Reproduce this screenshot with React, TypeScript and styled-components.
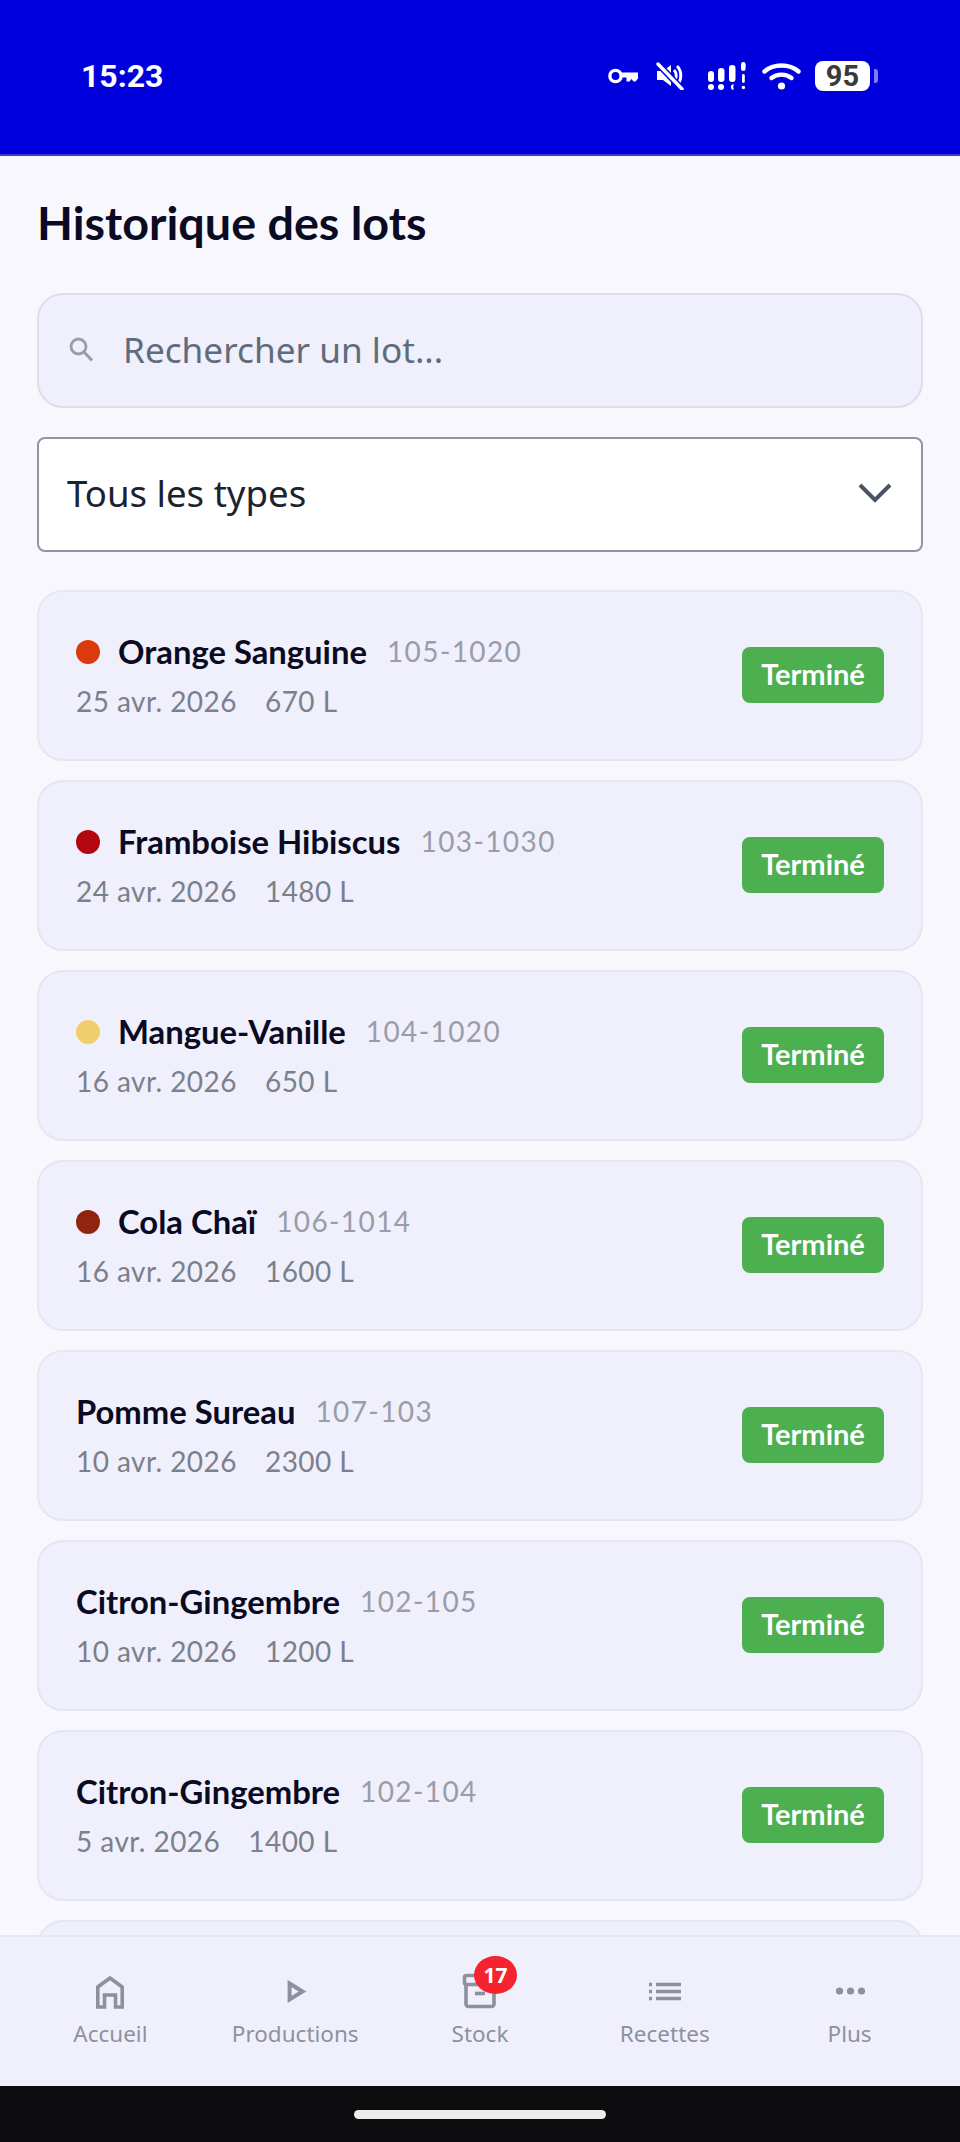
import React from "react";
import styled, { createGlobalStyle } from "styled-components";

const Global = createGlobalStyle`
  html, body { margin: 0; padding: 0; background: #f7f7fd; }
  * { box-sizing: border-box; }
`;

const Screen = styled.div`
  width: 960px;
  height: 2142px;
  display: flex;
  flex-direction: column;
  overflow: hidden;
  background: #f7f7fd;
  font-family: "Noto Sans", sans-serif;
`;

const StatusBar = styled.header`
  flex: 0 0 156px;
  background: #0000dc;
  border-bottom: 2px solid #3a3ad6;
  display: flex;
  align-items: flex-start;
  justify-content: space-between;
  padding: 58px 82px 0 81px;
`;

const Clock = styled.span`
  font-family: Roboto, sans-serif;
  font-weight: 700;
  font-size: 32px;
  line-height: 36px;
  color: #fff;
`;

const StatusIcons = styled.div`
  display: flex;
  align-items: center;
  height: 36px;
  color: #fff;
  svg { display: block; flex: none; }
`;

const KeyIcon = styled.svg`
  margin-right: 18px;
`;
const MuteIcon = styled.svg`
  margin-right: 24px;
`;
const SignalIcon = styled.svg`
  margin-right: 15px;
`;
const WifiIcon = styled.svg`
  margin-right: 14px;
`;

const Battery = styled.div`
  width: 55px;
  height: 30px;
  border-radius: 8px;
  background: #fff;
  color: #3a3a3a;
  font-family: Roboto, sans-serif;
  font-weight: 700;
  font-size: 29px;
  line-height: 30px;
  text-align: center;
`;
const BatteryTab = styled.div`
  width: 4px;
  height: 14px;
  margin-left: 4px;
  border-radius: 0 3px 3px 0;
  background: #7f7fee;
`;

const Content = styled.main`
  flex: 1;
  min-height: 0;
  overflow: hidden;
  padding: 0 37px;
`;

const Title = styled.h1`
  margin: 39px 0 0;
  font-family: Lato, sans-serif;
  font-weight: 700;
  font-size: 46.7px;
  line-height: 54px;
  color: #0a0a23;
`;

const Search = styled.div`
  margin-top: 44px;
  height: 115px;
  display: flex;
  align-items: center;
  padding: 0 0 3px 28px;
  background: #eff0fb;
  border: 2px solid #dcdeeb;
  border-radius: 26px;
  color: #9a9ca8;
`;

const SearchText = styled.span`
  margin-left: 28px;
  font-size: 35.2px;
  color: #5f6c7c;
`;

const Select = styled.div`
  margin-top: 29px;
  height: 115px;
  display: flex;
  align-items: center;
  justify-content: space-between;
  padding: 0 28px 3px 28px;
  background: #fff;
  border: 2px solid #8b95a3;
  border-radius: 8px;
  font-size: 36.6px;
  color: #1c2230;
`;

const List = styled.div`
  margin-top: 38px;
  display: flex;
  flex-direction: column;
  gap: 19px;
`;

const Card = styled.article`
  flex: none;
  height: 171px;
  display: flex;
  align-items: center;
  justify-content: space-between;
  padding: 0 37px;
  background: #eff0fb;
  border: 2px solid #e4e6f2;
  border-radius: 26px;
`;

const CardBody = styled.div`
  display: flex;
  flex-direction: column;
  gap: 9px;
`;

const NameRow = styled.div`
  display: flex;
  align-items: center;
  margin-top: -1px;
  margin-bottom: 1px;
`;

const Dot = styled.span<{ $color: string }>`
  width: 24px;
  height: 24px;
  margin-right: 18px;
  border-radius: 50%;
  background: ${(p) => p.$color};
`;

const Name = styled.span`
  font-family: Lato, sans-serif;
  font-weight: 700;
  font-size: 32.8px;
  line-height: 42px;
  color: #0a0a23;
`;

const Code = styled.span`
  margin-left: 20px;
  margin-top: -3px;
  font-family: Lato, sans-serif;
  font-size: 28px;
  letter-spacing: 1.4px;
  color: #9a9ca8;
`;

const Meta = styled.div`
  display: flex;
  gap: 28px;
  font-family: Lato, sans-serif;
  font-size: 28px;
  line-height: 36px;
  letter-spacing: 0.45px;
  color: #7c7f8c;
`;

const Status = styled.span`
  width: 142px;
  height: 56px;
  display: flex;
  align-items: center;
  justify-content: center;
  margin-bottom: 1px;
  padding-bottom: 4px;
  border-radius: 8px;
  background: #4caf50;
  color: #fff;
  font-family: Lato, sans-serif;
  font-weight: 700;
  font-size: 29px;
`;

const Nav = styled.nav`
  flex: 0 0 151px;
  display: grid;
  grid-template-columns: repeat(5, 1fr);
  background: #f0f0fc;
  border-top: 2px solid #e6e7f3;
  padding: 0 18px;
`;

const NavItem = styled.div`
  display: flex;
  flex-direction: column;
  align-items: center;
  padding-top: 32px;
  color: #8f909e;
`;

const NavIcon = styled.div`
  position: relative;
  width: 44px;
  height: 44px;
  svg { display: block; }
`;

const NavLabel = styled.span`
  margin-top: 6px;
  font-size: 22.5px;
  line-height: 30px;
`;

const CountBadge = styled.span`
  position: absolute;
  left: 16px;
  top: -13px;
  width: 43px;
  height: 38px;
  border-radius: 50%;
  display: flex;
  align-items: center;
  justify-content: center;
  background: #f3242f;
  color: #fff;
  font-weight: 700;
  font-size: 21px;
`;

const GestureBar = styled.div`
  flex: 0 0 56px;
  display: flex;
  justify-content: center;
  padding-top: 24px;
  background: #0c0c0e;
`;

const GesturePill = styled.div`
  width: 252px;
  height: 9px;
  border-radius: 5px;
  background: #ededed;
`;

type Lot = { name: string; code: string; date: string; volume: string; dot?: string };

const lots: Lot[] = [
  { name: "Orange Sanguine", code: "105-1020", date: "25 avr. 2026", volume: "670 L", dot: "#dc3a0c" },
  { name: "Framboise Hibiscus", code: "103-1030", date: "24 avr. 2026", volume: "1480 L", dot: "#b3070f" },
  { name: "Mangue-Vanille", code: "104-1020", date: "16 avr. 2026", volume: "650 L", dot: "#efcf6b" },
  { name: "Cola Chaï", code: "106-1014", date: "16 avr. 2026", volume: "1600 L", dot: "#90240f" },
  { name: "Pomme Sureau", code: "107-103", date: "10 avr. 2026", volume: "2300 L" },
  { name: "Citron-Gingembre", code: "102-105", date: "10 avr. 2026", volume: "1200 L" },
  { name: "Citron-Gingembre", code: "102-104", date: "5 avr. 2026", volume: "1400 L" },
];

const stroke = { fill: "none", stroke: "currentColor", strokeWidth: 3.6 } as const;

const navItems = [
  {
    label: "Accueil",
    icon: (
      <svg width="44" height="44" viewBox="0 0 44 44">
        <path d="M9.8 38V18L22 9L34.2 18V38H27.5V26H16.5V38Z" {...stroke} />
      </svg>
    ),
  },
  {
    label: "Productions",
    icon: (
      <svg width="44" height="44" viewBox="0 0 44 44">
        <path d="M16.6 14.5L29.5 22.5L16.6 30.5Z" {...stroke} strokeWidth={4} />
      </svg>
    ),
  },
  {
    label: "Stock",
    badge: "17",
    icon: (
      <svg width="44" height="44" viewBox="0 0 44 44">
        <rect x="6.5" y="6.5" width="31" height="9" rx="2" {...stroke} />
        <path d="M8 16V35a2.5 2.5 0 0 0 2.5 2.5H33.5a2.5 2.5 0 0 0 2.5-2.5V16" {...stroke} />
        <path d="M17 24.5H27" {...stroke} />
      </svg>
    ),
  },
  {
    label: "Recettes",
    icon: (
      <svg width="44" height="44" viewBox="0 0 44 44">
        <path d="M13 15.5H38M13 22.5H38M13 29.5H38" {...stroke} />
        <path d="M6 15.5H9M6 22.5H9M6 29.5H9" {...stroke} />
      </svg>
    ),
  },
  {
    label: "Plus",
    icon: (
      <svg width="44" height="44" viewBox="0 0 44 44" fill="currentColor">
        <circle cx="11.5" cy="22" r="3.6" />
        <circle cx="22.5" cy="22" r="3.6" />
        <circle cx="33.5" cy="22" r="3.6" />
      </svg>
    ),
  },
];

export default function App() {
  return (
    <Screen>
      <Global />
      <StatusBar>
        <Clock>15:23</Clock>
        <StatusIcons>
          <KeyIcon width="30" height="16" viewBox="0 0 30 16" fill="none">
            <circle cx="7.5" cy="8" r="5.6" stroke="currentColor" strokeWidth="3.4" />
            <path d="M12 4.6H30V10.5L27.5 13.5H25.5L23.5 11L21.5 13.5H18.5V9.6H12Z" fill="currentColor" />
          </KeyIcon>
          <MuteIcon width="28" height="28" viewBox="0 0 28 28" fill="none">
            <path d="M1 9H7L15 3V24L7 18H1Z" fill="currentColor" />
            <path d="M18 8C21 11 21 16 18 19M21 4C26 9 26 18 21 23" stroke="currentColor" strokeWidth="3" />
            <path d="M2 2L26 27" stroke="#0000dc" strokeWidth="6.5" />
            <path d="M2 2L26 27" stroke="currentColor" strokeWidth="3.4" strokeLinecap="round" />
          </MuteIcon>
          <SignalIcon width="39" height="28" viewBox="0 0 39 28" fill="currentColor">
            <rect x="0" y="9" width="6" height="11" rx="3" />
            <circle cx="3" cy="25" r="3" />
            <rect x="10" y="6" width="6.5" height="14" rx="3.2" />
            <circle cx="13" cy="25" r="3" />
            <rect x="21" y="3" width="6.5" height="17" rx="3.2" />
            <path d="M24 22.5C22.5 24 22.5 26.5 24 27.5H26C25 26 25 24 26 22.5Z" />
            <rect x="33" y="0" width="4.6" height="9" rx="2.3" />
            <rect x="34" y="12" width="2.8" height="9" rx="1.4" />
            <circle cx="35.4" cy="25.5" r="1.7" />
          </SignalIcon>
          <WifiIcon width="39" height="28" viewBox="0 0 39 28" fill="none">
            <path d="M2.5 9.5C11.5 1.5 27.5 1.5 36.5 9.5" stroke="currentColor" strokeWidth="4.4" strokeLinecap="round" />
            <path d="M9.5 16C15 11.5 24 11.5 29.5 16" stroke="currentColor" strokeWidth="4.4" strokeLinecap="round" />
            <circle cx="19.5" cy="24" r="3.6" fill="currentColor" />
          </WifiIcon>
          <Battery>95</Battery>
          <BatteryTab />
        </StatusIcons>
      </StatusBar>
      <Content>
        <Title>Historique des lots</Title>
        <Search>
          <svg width="28" height="28" viewBox="0 0 28 28" fill="none">
            <circle cx="11.5" cy="11.5" r="7.5" stroke="currentColor" strokeWidth="2.8" />
            <path d="M17 17L25 25.5" stroke="currentColor" strokeWidth="3" />
          </svg>
          <SearchText>Rechercher un lot...</SearchText>
        </Search>
        <Select>
          <span>Tous les types</span>
          <svg width="36" height="24" viewBox="0 0 36 24" fill="none">
            <path d="M3 4L18 19L33 4" stroke="#4a5463" strokeWidth="4" />
          </svg>
        </Select>
        <List>
          {lots.map((lot) => (
            <Card key={lot.code}>
              <CardBody>
                <NameRow>
                  {lot.dot && <Dot $color={lot.dot} />}
                  <Name>{lot.name}</Name>
                  <Code>{lot.code}</Code>
                </NameRow>
                <Meta>
                  <span>{lot.date}</span>
                  <span>{lot.volume}</span>
                </Meta>
              </CardBody>
              <Status>Terminé</Status>
            </Card>
          ))}
          <Card />
        </List>
      </Content>
      <Nav>
        {navItems.map((item) => (
          <NavItem key={item.label}>
            <NavIcon>
              {item.icon}
              {item.badge && <CountBadge>{item.badge}</CountBadge>}
            </NavIcon>
            <NavLabel>{item.label}</NavLabel>
          </NavItem>
        ))}
      </Nav>
      <GestureBar>
        <GesturePill />
      </GestureBar>
    </Screen>
  );
}
